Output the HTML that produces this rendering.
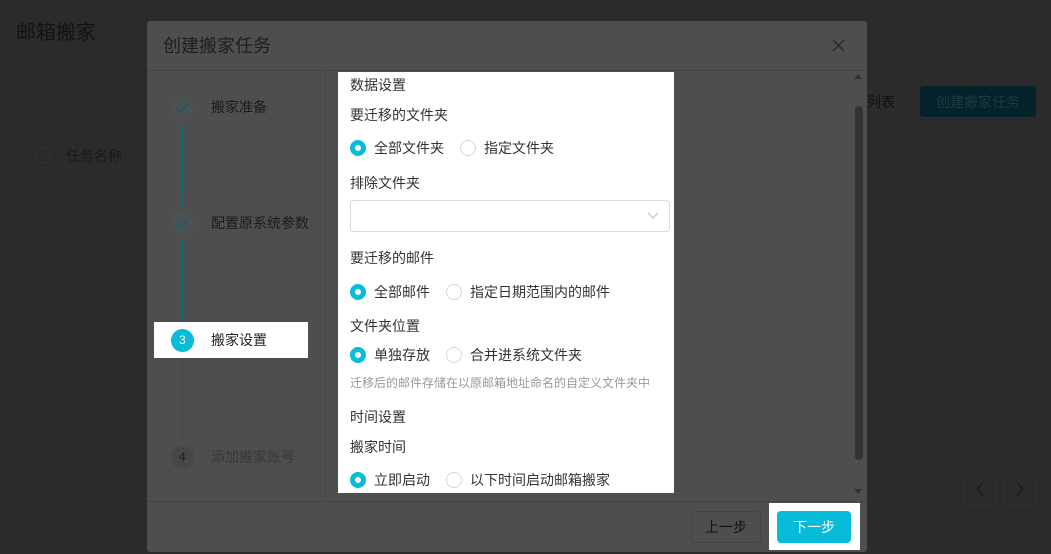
<!DOCTYPE html>
<html><head><meta charset="utf-8"><style>
*{margin:0;padding:0;box-sizing:border-box}
body{width:1051px;height:554px;background:#2b2b2b;position:relative;overflow:hidden;font-family:"Liberation Sans","Noto Sans CJK SC",sans-serif;font-size:14px;color:#333}
.a{position:absolute}
.t{position:absolute;white-space:nowrap;line-height:1}
.r{position:absolute;width:16px;height:16px;border-radius:50%;border:1px solid #d9d9d9;background:#fff}
.r.on{border:5px solid #06bcd8;background:#fff}
</style></head><body>
<div class="a" style="left:0;top:68px;width:1051px;height:1px;background:#262626"></div>
<div class="t" style="left:16px;top:23px;font-size:20px;color:#131313">邮箱搬家</div>
<div class="a" style="left:850px;top:86px;width:57px;height:31px;border:1px solid #303030;border-radius:3px"></div>
<div class="t" style="left:867px;top:95px;font-size:14px;color:#111">列表</div>
<div class="a" style="left:920px;top:86px;width:116px;height:31px;background:#05222a;border-radius:3px"></div>
<div class="t" style="left:936px;top:95px;font-size:14px;color:#1f3a40">创建搬家任务</div>
<div class="a" style="left:35px;top:148px;width:15px;height:15px;border:1px solid #333;border-radius:3px"></div>
<div class="t" style="left:66px;top:149px;font-size:14px;color:#1a1a1a">任务名称</div>
<div class="a" style="left:964px;top:473px;width:32px;height:32px;border:1px solid #303030;border-radius:3px"></div>
<div class="a" style="left:1004px;top:473px;width:32px;height:32px;border:1px solid #303030;border-radius:3px"></div>
<svg class="a" style="left:975px;top:481px" width="10" height="16"><path d="M8 1L2 8l6 7" fill="none" stroke="#1c1c1c" stroke-width="1.5"/></svg>
<svg class="a" style="left:1015px;top:481px" width="10" height="16"><path d="M2 1l6 7-6 7" fill="none" stroke="#1c1c1c" stroke-width="1.5"/></svg>

<div class="a" style="left:147px;top:21px;width:720px;height:531px;background:#4e4e4e;border-radius:3px"></div>
<div class="t" style="left:163px;top:37px;font-size:18px;color:#1e1e1e">创建搬家任务</div>
<svg class="a" style="left:832px;top:39px" width="13" height="13"><path d="M1 1l11 11M12 1L1 12" stroke="#262626" stroke-width="1.3"/></svg>
<div class="a" style="left:147px;top:70px;width:720px;height:1px;background:#444"></div>
<div class="a" style="left:325px;top:71px;width:1px;height:430px;background:#474747"></div>
<div class="a" style="left:147px;top:501px;width:720px;height:1px;background:#444"></div>

<div class="a" style="left:171px;top:96px;width:23px;height:23px;border-radius:50%;background:#4a5253"></div>
<svg class="a" style="left:176px;top:103px" width="13" height="10"><path d="M1 5l4 4 7-8" fill="none" stroke="#0b5d69" stroke-width="1.3"/></svg>
<div class="t" style="left:211px;top:100px;color:#1c1c1c">搬家准备</div>
<div class="a" style="left:182px;top:125px;width:1px;height:80px;background:#0b6e7c"></div>
<div class="a" style="left:171px;top:211px;width:23px;height:23px;border-radius:50%;background:#4a5253"></div>
<svg class="a" style="left:176px;top:218px" width="13" height="10"><path d="M1 5l4 4 7-8" fill="none" stroke="#0b5d69" stroke-width="1.3"/></svg>
<div class="t" style="left:211px;top:216px;color:#1c1c1c">配置原系统参数</div>
<div class="a" style="left:182px;top:240px;width:1px;height:82px;background:#0b6e7c"></div>
<div class="a" style="left:182px;top:358px;width:1px;height:84px;background:#474747"></div>
<div class="a" style="left:154px;top:322px;width:154px;height:36px;background:#fff"></div>
<div class="a" style="left:171px;top:329px;width:23px;height:23px;border-radius:50%;background:#06bcd8"></div>
<div class="t" style="left:179px;top:334px;color:#fff;font-size:12px">3</div>
<div class="t" style="left:211px;top:333px;color:#222">搬家设置</div>
<div class="a" style="left:171px;top:446px;width:23px;height:23px;border-radius:50%;background:#474747"></div>
<div class="t" style="left:179px;top:451px;color:#1e1e1e;font-size:12px">4</div>
<div class="t" style="left:211px;top:450px;color:#383838">添加搬家账号</div>

<div class="a" style="left:854px;top:74px;width:0;height:0;border:4px solid transparent;border-bottom:5px solid #333;border-top:0"></div>
<div class="a" style="left:855px;top:106px;width:8px;height:354px;background:#333;border-radius:4px"></div>
<div class="a" style="left:854px;top:489px;width:0;height:0;border:4px solid transparent;border-top:5px solid #333;border-bottom:0"></div>

<div class="a" style="left:338px;top:72px;width:336px;height:421px;background:#fff"></div>
<div class="t" style="left:350px;top:78px">数据设置</div>
<div class="t" style="left:350px;top:108px">要迁移的文件夹</div>
<div class="r on" style="left:350px;top:140px"></div><div class="t" style="left:374px;top:141px">全部文件夹</div>
<div class="r" style="left:460px;top:140px"></div><div class="t" style="left:484px;top:141px">指定文件夹</div>
<div class="t" style="left:350px;top:176px">排除文件夹</div>
<div class="a" style="left:350px;top:200px;width:320px;height:32px;border:1px solid #d9d9d9;border-radius:4px"></div>
<svg class="a" style="left:647px;top:212px" width="12" height="8"><path d="M1 1l5 5 5-5" fill="none" stroke="#bbb" stroke-width="1"/></svg>
<div class="t" style="left:350px;top:251px">要迁移的邮件</div>
<div class="r on" style="left:350px;top:284px"></div><div class="t" style="left:374px;top:285px">全部邮件</div>
<div class="r" style="left:446px;top:284px"></div><div class="t" style="left:470px;top:285px">指定日期范围内的邮件</div>
<div class="t" style="left:350px;top:319px">文件夹位置</div>
<div class="r on" style="left:350px;top:347px"></div><div class="t" style="left:374px;top:348px">单独存放</div>
<div class="r" style="left:446px;top:347px"></div><div class="t" style="left:470px;top:348px">合并进系统文件夹</div>
<div class="t" style="left:350px;top:377px;font-size:12px;color:#999">迁移后的邮件存储在以原邮箱地址命名的自定义文件夹中</div>
<div class="t" style="left:350px;top:410px">时间设置</div>
<div class="t" style="left:350px;top:440px">搬家时间</div>
<div class="r on" style="left:350px;top:472px"></div><div class="t" style="left:374px;top:473px">立即启动</div>
<div class="r" style="left:446px;top:472px"></div><div class="t" style="left:470px;top:473px">以下时间启动邮箱搬家</div>

<div class="a" style="left:691px;top:511px;width:70px;height:32px;border:1px solid #444;border-radius:4px"></div>
<div class="t" style="left:705px;top:520px;color:#111">上一步</div>
<div class="a" style="left:769px;top:503px;width:91px;height:47px;background:#fff"></div>
<div class="a" style="left:777px;top:511px;width:74px;height:32px;background:#06bcd8;border-radius:4px"></div>
<div class="t" style="left:793px;top:520px;color:#fff">下一步</div>
</body></html>
